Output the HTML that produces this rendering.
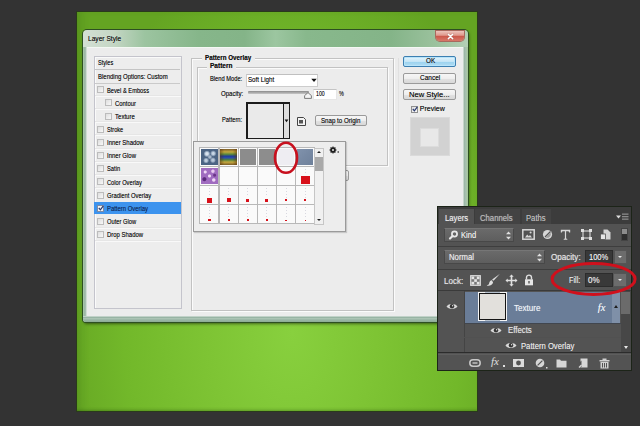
<!DOCTYPE html>
<html><head><meta charset="utf-8">
<style>
*{margin:0;padding:0;box-sizing:border-box}
html,body{width:640px;height:426px;overflow:hidden;background:#333333;font-family:"Liberation Sans",sans-serif;position:relative}
div,span{position:absolute}
.t{white-space:nowrap;line-height:10px;font-size:7px;color:#111;text-shadow:0 0 .6px rgba(0,0,0,.5);transform-origin:0 50%;transform:scaleX(.84)}
.t8{font-size:8px}
.t6{font-size:6.5px}
.t7{font-size:7px}
.t85{font-size:8.5px}
.b{font-weight:bold}
.w{color:#e2e2e2}
#green{left:77px;top:12px;width:400px;height:399px;
 background:radial-gradient(ellipse 240px 380px at 215px 320px,#88d03e 0%,#7ec434 35%,#72b82a 70%,#64a422 100%);
 box-shadow:0 0 0 1px #2a3a1c, inset 0 -3px 3px -2px rgba(20,60,0,.3), inset 8px 0 8px -4px rgba(20,60,0,.15)}
#frame{left:83px;top:30px;width:385px;height:292px;border-radius:4px 4px 3px 3px;
 background:linear-gradient(90deg,#d4e0d4 0%,#c4d6c4 8%,#9cc4a0 16%,#86b68a 30%,#84b488 42%,#9cc6a0 50%,#88b88c 58%,#84b488 80%,#9cc29e 92%,#b4d0b6 100%);
 box-shadow:0 0 0 1px #2d4f22, 1px 2px 3px rgba(0,0,0,.5)}
#frame2{left:83px;top:47px;width:385px;height:275px;border-radius:0 0 3px 3px;
 background:linear-gradient(90deg,#b4d8a8 0px,#98b4a2 1px,#aac2b2 3px,#f4f8f4 4px,#f4f8f4 380px,#98b4a2 381px,#aac2b2 383px,#a6c896 385px)}
#frame3{left:83px;top:316px;width:385px;height:6px;border-radius:0 0 3px 3px;
 background:linear-gradient(#f4f8f4 0px,#8eac9c 1px,#a2bcac 2px,#b4ccbc 3px,#8aa898 4px,#a4c0ac 5px,#7c9c84 6px)}
#client{left:87px;top:48px;width:376px;height:268px;background:#ececec}
#close{left:436px;top:31px;width:28px;height:10px;border-radius:0 0 4px 4px;
 background:linear-gradient(#ecc4bc 0%,#e09a8e 42%,#cc5a4c 55%,#d8786a 100%);box-shadow:0 0 0 1px #a86a5e}
.list{left:93.5px;top:55.5px;width:88px;height:253px;background:#ededed;border:1px solid #c4c4cc;box-shadow:1px 1px 0 #fafafa inset}
.sep{height:1px;background:#e2e2e2;left:95px;width:85px}
.cb{width:7px;height:7px;border:1px solid #bcbcbc;background:linear-gradient(135deg,#dedede,#f8f8f8)}
.gb{border:1px solid #c2c2c2;box-shadow:1px 1px 0 #fbfbfb inset,1px 1px 0 #fbfbfb}
.btn{border:1px solid #9a9a9a;border-radius:2px;background:linear-gradient(#f6f6f6 0%,#eeeeee 50%,#e2e2e2 51%,#d8d8d8 100%)}
</style></head><body>
<div id="green"></div>

<!-- dialog -->
<div id="frame"></div>
<div id="frame2"></div>
<div id="frame3"></div>
<div class="t t7" style="left:87.5px;top:34.3px;color:#141414;transform:scaleX(.946);text-shadow:0 0 .6px rgba(0,0,0,.5),0 0 3px rgba(255,255,255,.6)">Layer Style</div>
<div id="close"></div>
<svg style="position:absolute;left:447.3px;top:33px" width="7" height="7" viewBox="0 0 7 7"><path d="M1.3 1.3L5.7 5.7M5.7 1.3L1.3 5.7" stroke="#6a2a20" stroke-width="2.4" stroke-linecap="round" opacity=".3"/><path d="M1.3 1.3L5.7 5.7M5.7 1.3L1.3 5.7" stroke="#fff" stroke-width="1.6" stroke-linecap="round"/></svg>
<div id="client"></div>

<!-- left list -->
<div class="list"></div>
<div class="sep" style="top:68.6px;height:1.2px;background:#c4c4c4"></div>
<div class="sep" style="top:83px;background:#cacaca"></div>
<div style="left:94.5px;top:96.00px;width:86px;height:1px;background:#f9f9f9"></div><div style="left:94.5px;top:95.00px;width:86px;height:1px;background:#e6e6e6"></div><div style="left:94.5px;top:109.15px;width:86px;height:1px;background:#f9f9f9"></div><div style="left:94.5px;top:108.15px;width:86px;height:1px;background:#e6e6e6"></div><div style="left:94.5px;top:122.30px;width:86px;height:1px;background:#f9f9f9"></div><div style="left:94.5px;top:121.30px;width:86px;height:1px;background:#e6e6e6"></div><div style="left:94.5px;top:135.45px;width:86px;height:1px;background:#f9f9f9"></div><div style="left:94.5px;top:134.45px;width:86px;height:1px;background:#e6e6e6"></div><div style="left:94.5px;top:148.60px;width:86px;height:1px;background:#f9f9f9"></div><div style="left:94.5px;top:147.60px;width:86px;height:1px;background:#e6e6e6"></div><div style="left:94.5px;top:161.75px;width:86px;height:1px;background:#f9f9f9"></div><div style="left:94.5px;top:160.75px;width:86px;height:1px;background:#e6e6e6"></div><div style="left:94.5px;top:174.90px;width:86px;height:1px;background:#f9f9f9"></div><div style="left:94.5px;top:173.90px;width:86px;height:1px;background:#e6e6e6"></div><div style="left:94.5px;top:188.05px;width:86px;height:1px;background:#f9f9f9"></div><div style="left:94.5px;top:187.05px;width:86px;height:1px;background:#e6e6e6"></div><div style="left:94.5px;top:227.50px;width:86px;height:1px;background:#f9f9f9"></div><div style="left:94.5px;top:226.50px;width:86px;height:1px;background:#e6e6e6"></div><div style="left:94.5px;top:240.65px;width:86px;height:1px;background:#f9f9f9"></div><div style="left:94.5px;top:239.65px;width:86px;height:1px;background:#e6e6e6"></div>
<div class="t t6" style="left:97.8px;top:58.3px;transform:scaleX(0.86)">Styles</div>
<div class="t t6" style="transform:scaleX(0.923);left:97.8px;top:72.40px">Blending Options: Custom</div>
<div class="cb" style="left:97.3px;top:86.30px"></div>
<div class="t t6" style="left:106.9px;top:85.52px;transform:scaleX(0.881)">Bevel &amp; Emboss</div>
<div class="cb" style="left:104.8px;top:99.45px"></div>
<div class="t t6" style="left:114.6px;top:98.67px;transform:scaleX(0.908)">Contour</div>
<div class="cb" style="left:104.8px;top:112.60px"></div>
<div class="t t6" style="left:114.6px;top:111.82px;transform:scaleX(0.930)">Texture</div>
<div class="cb" style="left:97.3px;top:125.75px"></div>
<div class="t t6" style="left:106.9px;top:124.97px;transform:scaleX(0.861)">Stroke</div>
<div class="cb" style="left:97.3px;top:138.90px"></div>
<div class="t t6" style="left:106.9px;top:138.12px;transform:scaleX(0.921)">Inner Shadow</div>
<div class="cb" style="left:97.3px;top:152.05px"></div>
<div class="t t6" style="left:106.9px;top:151.27px;transform:scaleX(0.923)">Inner Glow</div>
<div class="cb" style="left:97.3px;top:165.20px"></div>
<div class="t t6" style="left:106.9px;top:164.42px;transform:scaleX(0.886)">Satin</div>
<div class="cb" style="left:97.3px;top:178.35px"></div>
<div class="t t6" style="left:106.9px;top:177.57px;transform:scaleX(0.876)">Color Overlay</div>
<div class="cb" style="left:97.3px;top:191.50px"></div>
<div class="t t6" style="left:106.9px;top:190.72px;transform:scaleX(0.900)">Gradient Overlay</div>
<div style="left:94px;top:201.7px;width:87px;height:12.2px;background:#3c93ee"></div>
<div class="cb" style="left:97.3px;top:204.65px;background:#f2f2f2;border-color:#7d8aa4"></div>
<svg style="position:absolute;left:98.1px;top:205.05px" width="6" height="6" viewBox="0 0 6 6"><path d="M0.8 3l1.6 1.8L5.3 0.8" fill="none" stroke="#2a3a70" stroke-width="1.2"/></svg>
<div class="t t6" style="left:106.9px;top:203.87px;transform:scaleX(0.908);color:#12306a">Pattern Overlay</div>
<div class="cb" style="left:97.3px;top:217.80px"></div>
<div class="t t6" style="left:106.9px;top:217.02px;transform:scaleX(0.884)">Outer Glow</div>
<div class="cb" style="left:97.3px;top:230.95px"></div>
<div class="t t6" style="left:106.9px;top:230.17px;transform:scaleX(0.915)">Drop Shadow</div>

<!-- right content -->
<div class="gb" style="left:191px;top:58px;width:203px;height:252.5px"></div>
<div style="left:397.5px;top:58px;width:1px;height:200px;background:linear-gradient(#e0e0e0,#ececec)"></div>
<div style="left:202px;top:54px;width:53px;height:8px;background:#ececec"></div>
<div class="t t6 b" style="left:204.5px;top:52.7px;transform:scaleX(0.960)">Pattern Overlay</div>
<div class="gb" style="left:196.5px;top:66.5px;width:191.5px;height:99.5px"></div>
<div style="left:207px;top:62px;width:29px;height:8px;background:#ececec"></div>
<div class="t t6 b" style="left:210px;top:60.7px;transform:scaleX(1.006)">Pattern</div>

<div class="t t6" style="left:209.8px;top:74.4px;transform:scaleX(0.882)">Blend Mode:</div>
<div style="left:245.5px;top:73.5px;width:72px;height:13px;background:#fff;border:1px solid #cdcdcd;border-top-color:#c0c0c0"></div>
<div class="t t6" style="left:248.1px;top:74.8px;transform:scaleX(0.951)">Soft Light</div>
<svg style="position:absolute;left:310.5px;top:77.5px" width="6" height="5" viewBox="0 0 6 5"><path d="M0.3 0.8h5.4L3 4z" fill="#111"/></svg>

<div class="t t6" style="left:220.6px;top:88.5px;transform:scaleX(0.932)">Opacity:</div>
<div style="left:248px;top:91.2px;width:61px;height:2.6px;background:linear-gradient(#8a8a8a,#c8c8c8);border-radius:1px"></div>
<svg style="position:absolute;left:304px;top:91.5px" width="8" height="7" viewBox="0 0 8 7"><path d="M4 0.6L7.4 3.6V6.4H0.6V3.6z" fill="#f4f4f4" stroke="#6e6e6e" stroke-width="0.9"/></svg>
<div style="left:312.5px;top:88.5px;width:24px;height:11px;background:#fff;border:1px solid #e6e6e6;border-top-color:#c4c4c4"></div>
<div class="t t6" style="left:316.2px;top:89.2px;transform:scaleX(0.803)">100</div>
<div class="t t6" style="left:339px;top:89.2px;transform:scaleX(0.831)">%</div>

<div class="t t6" style="left:222px;top:115px;transform:scaleX(0.886)">Pattern:</div>
<div style="left:246.2px;top:102.2px;width:44px;height:36.8px;background:#1c1c1c"></div>
<div style="left:247.6px;top:103.6px;width:35.4px;height:34px;background:#eaeaea"></div>
<div style="left:284.2px;top:103.6px;width:4.6px;height:34px;background:#dedede"></div>
<svg style="position:absolute;left:284.3px;top:119.3px" width="5" height="4" viewBox="0 0 5 4"><path d="M0.6 0.6h3.8L2.5 3.2z" fill="#111"/></svg>
<svg style="position:absolute;left:296px;top:115.5px" width="11" height="11" viewBox="0 0 11 11"><path d="M1.5 1.5h6l2 2v6h-8z" fill="#f4f4f4" stroke="#444" stroke-width="1"/><path d="M3 4h4v3.5H3z" fill="#555"/></svg>
<div class="btn" style="left:314.5px;top:115.4px;width:52px;height:11px"></div>
<div class="t t6" style="left:320.9px;top:116.1px;transform:scaleX(0.947)">Snap to Origin</div>

<div class="btn" style="left:343px;top:169.5px;width:6px;height:11px"></div>

<!-- popup picker -->
<div id="popup" style="left:193px;top:141px;width:152.5px;height:91px;background:#ededed;border:1px solid #9a9a9a;box-shadow:1px 1px 1px rgba(0,0,0,.15)"></div>
<div style="left:199.4px;top:147.4px;width:115.9px;height:76.4px;background:#b8b8b8"></div>
<div style="left:200.4px;top:148.4px;width:18.1px;height:17.9px;background:#fafafa"></div>
<div style="left:201.2px;top:149.2px;width:16.5px;height:16.2px;background:radial-gradient(circle at 35% 30%,#d8e2ee 0 1.2px,#9fb2c8 2.2px,transparent 3.4px),radial-gradient(circle at 72% 28%,#c8d6e6 0 1px,#95a8c0 2px,transparent 3.2px),radial-gradient(circle at 30% 72%,#c0cede 0 1px,#8ea2ba 2px,transparent 3px),radial-gradient(circle at 70% 70%,#b8c8da 0 1px,#8ea0b8 2px,transparent 3px),radial-gradient(circle at 52% 50%,#a8b8cc 0 1px,transparent 2.5px),#4c6484"></div>
<div style="left:219.6px;top:148.4px;width:18.1px;height:17.9px;background:#fafafa"></div>
<div style="left:220.4px;top:149.2px;width:16.5px;height:16.2px;background:linear-gradient(90deg,rgba(90,50,10,.55),transparent 25%,transparent 75%,rgba(90,50,10,.55)),linear-gradient(#7a5a28 0%,#c4a83e 18%,#5a8a3a 33%,#1e3c9a 45%,#2a4cae 55%,#4a8040 67%,#c4a83e 82%,#7a5a28 100%)"></div>
<div style="left:238.7px;top:148.4px;width:18.1px;height:17.9px;background:#fafafa"></div>
<div style="left:239.5px;top:149.2px;width:16.5px;height:16.2px;background:#8c8c8c"></div>
<div style="left:257.9px;top:148.4px;width:18.1px;height:17.9px;background:#fafafa"></div>
<div style="left:258.7px;top:149.2px;width:16.5px;height:16.2px;background:#8d8d8d"></div>
<div style="left:277.0px;top:148.4px;width:18.1px;height:17.9px;background:#fafafa"></div>
<div style="left:277.8px;top:149.2px;width:16.5px;height:16.2px;background:#eeedf2"></div>
<div style="left:296.1px;top:148.4px;width:18.1px;height:17.9px;background:#fafafa"></div>
<div style="left:296.9px;top:149.2px;width:16.5px;height:16.2px;background:linear-gradient(135deg,#8092ac,#6e809a)"></div>
<div style="left:200.4px;top:167.2px;width:18.1px;height:17.9px;background:#fafafa"></div>
<div style="left:201.2px;top:168.1px;width:16.5px;height:16.2px;background:radial-gradient(circle at 25% 25%,#f0d8f6 0 1px,transparent 2px),radial-gradient(circle at 70% 20%,#e8c8f0 0 1.2px,transparent 2.2px),radial-gradient(circle at 50% 50%,#f4e0f8 0 1px,transparent 2px),radial-gradient(circle at 20% 70%,#5a2a7a 0 1.5px,transparent 2.5px),radial-gradient(circle at 75% 75%,#eed6f4 0 1.2px,transparent 2.2px),radial-gradient(circle at 80% 45%,#6a3488 0 1px,transparent 2px),#a06cc0"></div>
<div style="left:219.6px;top:167.2px;width:18.1px;height:17.9px;background:#fafafa"></div>
<div style="left:238.7px;top:167.2px;width:18.1px;height:17.9px;background:#fafafa"></div>
<div style="left:257.9px;top:167.2px;width:18.1px;height:17.9px;background:#fafafa"></div>
<div style="left:277.0px;top:167.2px;width:18.1px;height:17.9px;background:#fafafa"></div>
<div style="left:296.1px;top:167.2px;width:18.1px;height:17.9px;background:#fafafa"></div>
<div style="left:200.4px;top:186.1px;width:18.1px;height:17.9px;background:#fafafa"></div>
<div style="left:219.6px;top:186.1px;width:18.1px;height:17.9px;background:#fafafa"></div>
<div style="left:238.7px;top:186.1px;width:18.1px;height:17.9px;background:#fafafa"></div>
<div style="left:257.9px;top:186.1px;width:18.1px;height:17.9px;background:#fafafa"></div>
<div style="left:277.0px;top:186.1px;width:18.1px;height:17.9px;background:#fafafa"></div>
<div style="left:296.1px;top:186.1px;width:18.1px;height:17.9px;background:#fafafa"></div>
<div style="left:200.4px;top:205.0px;width:18.1px;height:17.9px;background:#fafafa"></div>
<div style="left:219.6px;top:205.0px;width:18.1px;height:17.9px;background:#fafafa"></div>
<div style="left:238.7px;top:205.0px;width:18.1px;height:17.9px;background:#fafafa"></div>
<div style="left:257.9px;top:205.0px;width:18.1px;height:17.9px;background:#fafafa"></div>
<div style="left:277.0px;top:205.0px;width:18.1px;height:17.9px;background:#fafafa"></div>
<div style="left:296.1px;top:205.0px;width:18.1px;height:17.9px;background:#fafafa"></div>
<div style="left:301.0px;top:175.6px;width:8.5px;height:8.5px;background:#d8101a"></div>
<div style="left:304.7px;top:169.2px;width:1px;height:5.3px;background:repeating-linear-gradient(#d8d8e0 0 1px,transparent 1px 3px)"></div>
<div style="left:207.2px;top:198.1px;width:4.5px;height:4.5px;background:#d8101a"></div>
<div style="left:209.0px;top:188.1px;width:1px;height:8.4px;background:repeating-linear-gradient(#d8d8e0 0 1px,transparent 1px 3px)"></div>
<div style="left:226.6px;top:198.3px;width:4px;height:4px;background:#d8101a"></div>
<div style="left:228.1px;top:188.1px;width:1px;height:8.9px;background:repeating-linear-gradient(#d8d8e0 0 1px,transparent 1px 3px)"></div>
<div style="left:246.3px;top:198.8px;width:3px;height:3px;background:#d8101a"></div>
<div style="left:247.3px;top:188.1px;width:1px;height:9.4px;background:repeating-linear-gradient(#d8d8e0 0 1px,transparent 1px 3px)"></div>
<div style="left:265.4px;top:198.8px;width:3px;height:3px;background:#d8101a"></div>
<div style="left:266.4px;top:188.1px;width:1px;height:9.4px;background:repeating-linear-gradient(#d8d8e0 0 1px,transparent 1px 3px)"></div>
<div style="left:285.0px;top:199.2px;width:2.2px;height:2.2px;background:#d8101a"></div>
<div style="left:285.6px;top:188.1px;width:1px;height:9.9px;background:repeating-linear-gradient(#d8d8e0 0 1px,transparent 1px 3px)"></div>
<div style="left:304.1px;top:199.2px;width:2.2px;height:2.2px;background:#d8101a"></div>
<div style="left:304.7px;top:188.1px;width:1px;height:9.9px;background:repeating-linear-gradient(#d8d8e0 0 1px,transparent 1px 3px)"></div>
<div style="left:208.4px;top:219.1px;width:2.2px;height:2.2px;background:#d8101a"></div>
<div style="left:209.0px;top:207.0px;width:1px;height:11.1px;background:repeating-linear-gradient(#d8d8e0 0 1px,transparent 1px 3px)"></div>
<div style="left:227.5px;top:219.1px;width:2.2px;height:2.2px;background:#d8101a"></div>
<div style="left:228.1px;top:207.0px;width:1px;height:11.1px;background:repeating-linear-gradient(#d8d8e0 0 1px,transparent 1px 3px)"></div>
<div style="left:246.9px;top:219.2px;width:1.8px;height:1.8px;background:#d8101a"></div>
<div style="left:247.3px;top:207.0px;width:1px;height:11.3px;background:repeating-linear-gradient(#d8d8e0 0 1px,transparent 1px 3px)"></div>
<div style="left:266.0px;top:219.2px;width:1.8px;height:1.8px;background:#d8101a"></div>
<div style="left:266.4px;top:207.0px;width:1px;height:11.3px;background:repeating-linear-gradient(#d8d8e0 0 1px,transparent 1px 3px)"></div>
<div style="left:285.4px;top:219.5px;width:1.4px;height:1.4px;background:#d8101a"></div>
<div style="left:285.6px;top:207.0px;width:1px;height:11.5px;background:repeating-linear-gradient(#d8d8e0 0 1px,transparent 1px 3px)"></div>
<div style="left:304.5px;top:219.5px;width:1.4px;height:1.4px;background:#d8101a"></div>
<div style="left:304.7px;top:207.0px;width:1px;height:11.5px;background:repeating-linear-gradient(#d8d8e0 0 1px,transparent 1px 3px)"></div>
<div style="left:314px;top:147.5px;width:10px;height:77.4px;background:#f0f0f0;border:1px solid #c6c6c6"></div>
<div style="left:316.5px;top:151px;width:0;height:0;border-left:2.5px solid transparent;border-right:2.5px solid transparent;border-bottom:2.5px solid #222"></div>
<div style="left:315px;top:156.5px;width:8px;height:14px;background:#a9a9a9"></div>
<div style="left:316.5px;top:218.5px;width:0;height:0;border-left:2.5px solid transparent;border-right:2.5px solid transparent;border-top:2.5px solid #222"></div>
<svg style="position:absolute;left:328.6px;top:146.4px" width="11" height="8" viewBox="0 0 11 8"><g fill="#1e1e1e"><circle cx="4" cy="4" r="2.6"/><rect x="3.3" y="0.6" width="1.4" height="6.8"/><rect x="0.6" y="3.3" width="6.8" height="1.4"/><rect x="3.3" y="0.6" width="1.4" height="6.8" transform="rotate(45 4 4)"/><rect x="3.3" y="0.6" width="1.4" height="6.8" transform="rotate(-45 4 4)"/></g><circle cx="4" cy="4" r="1" fill="#ededed"/><circle cx="9.2" cy="6" r="0.8" fill="#1e1e1e"/></svg>
<svg style="position:absolute;left:270px;top:138px" width="32" height="40" viewBox="0 0 32 40"><ellipse cx="16" cy="19.8" rx="11" ry="15" fill="none" stroke="#c8101e" stroke-width="2.6"/></svg>


<!-- right buttons -->
<div style="left:403.4px;top:55.6px;width:53px;height:11px;border:1px solid #3c7fb1;border-radius:2px;background:linear-gradient(#e5f5fc 0%,#c4e5f6 50%,#98d1ef 51%,#b2dcf2 100%);box-shadow:0 0 0 1px #b8e4fa inset"></div>
<div class="t t7" style="left:425.5px;top:56.4px;transform:scaleX(.9)">OK</div>
<div class="btn" style="left:403.4px;top:72.5px;width:53px;height:11px"></div>
<div class="t t7" style="left:419.8px;top:73.2px;transform:scaleX(.926)">Cancel</div>
<div class="btn" style="left:403.4px;top:89.4px;width:53px;height:11px"></div>
<div class="t t7" style="left:409.2px;top:90.3px;transform:scaleX(1.088)">New Style...</div>
<div class="cb" style="left:410.8px;top:105.5px;width:7px;height:7px;border-color:#8f8f8f"></div>
<svg style="position:absolute;left:411.6px;top:106.2px" width="6" height="6" viewBox="0 0 6 6"><path d="M0.8 3l1.6 1.8L5.3 0.8" fill="none" stroke="#2a3a70" stroke-width="1.2"/></svg>
<div class="t t7" style="left:419.8px;top:104.4px;transform:scaleX(1.0)">Preview</div>
<div style="left:410px;top:117px;width:39.5px;height:39px;background:#d2d2d2;border:1px solid #dadada"></div>
<div style="left:419.8px;top:127.6px;width:19px;height:19px;background:#e8e8e8;border:1px solid #dcdcdc"></div>

<!-- layers panel -->
<div style="left:438px;top:207px;width:193px;height:162.5px;background:#535353;box-shadow:0 0 0 1px #1c2418"></div>
<div style="left:438px;top:207px;width:193px;height:17px;background:#3c3c3c"></div>
<div style="left:439px;top:209px;width:35px;height:15px;background:#535353"></div>
<div style="left:475px;top:209px;width:45px;height:14.5px;background:#434343"></div>
<div style="left:522px;top:209px;width:29px;height:14.5px;background:#434343"></div>
<div class="t t85 w" style="transform:scaleX(0.910);text-shadow:0 0 .7px rgba(255,255,255,.55);left:445px;top:212.8px;color:#ececec">Layers</div>
<div class="t t85" style="transform:scaleX(0.908);text-shadow:0 0 .7px rgba(255,255,255,.55);left:480px;top:212.8px;color:#b4b4b4">Channels</div>
<div class="t t85" style="transform:scaleX(0.903);text-shadow:0 0 .7px rgba(255,255,255,.55);left:525.6px;top:212.8px;color:#b4b4b4">Paths</div>
<svg style="position:absolute;left:615px;top:213px" width="14" height="9" viewBox="0 0 14 9"><path d="M1 2.5h5l-2.5 3z" fill="#ddd"/><g fill="#8a8a8a"><rect x="7" y="0.5" width="6.5" height="1.3"/><rect x="7" y="3" width="6.5" height="1.3"/><rect x="7" y="5.5" width="6.5" height="1.3"/></g></svg>

<!-- filter row -->
<div style="left:444px;top:227.5px;width:70px;height:14.5px;background:linear-gradient(#6a6a6a,#5e5e5e);border:1px solid #484848;border-top-color:#767676;border-radius:1px"></div>
<svg style="position:absolute;left:447px;top:229px" width="12" height="11" viewBox="0 0 12 11"><circle cx="7.5" cy="5" r="2.6" fill="none" stroke="#e8e8e8" stroke-width="1.7"/><path d="M5.6 7L3 9.6" stroke="#e8e8e8" stroke-width="2.1" stroke-linecap="round"/></svg>
<div class="t t85" style="transform:scaleX(0.891);text-shadow:0 0 .7px rgba(255,255,255,.55);left:460.6px;top:230.4px;color:#ececec">Kind</div>
<svg style="position:absolute;left:505px;top:229.5px" width="7" height="11" viewBox="0 0 7 11"><path d="M1 4.3L3.5 1.5 6 4.3zM1 6.7L3.5 9.5 6 6.7z" fill="#e0e0e0"/></svg>
<svg style="position:absolute;left:522px;top:229px" width="13" height="11" viewBox="0 0 13 11"><rect x="0.8" y="0.8" width="11.4" height="9.4" fill="none" stroke="#d8d8d8" stroke-width="1.5"/><path d="M3 8.5l2.2-3 1.6 1.8 1.2-1.2 2 2.4z" fill="#d8d8d8"/><circle cx="8.6" cy="3.6" r="1" fill="#d8d8d8"/></svg>
<svg style="position:absolute;left:542px;top:229px" width="11" height="11" viewBox="0 0 11 11"><circle cx="5.5" cy="5.5" r="4.6" fill="#d6d6d6"/><path d="M3 8L8.5 2.5" stroke="#555" stroke-width="1.3"/><path d="M3.5 8.5A3.8 3.8 0 0 0 8.5 3.5z" fill="#9a9a9a"/></svg>
<svg style="position:absolute;left:560px;top:229px" width="11" height="11" viewBox="0 0 11 11"><path d="M0.8 0.8h9.4v2.8h-1.1l-0.5-1.4h-2.5v7.2l1.2 0.5v0.9h-3.6v-0.9l1.2-0.5v-7.2h-2.5l-0.5 1.4h-1.1z" fill="#d8d8d8"/></svg>
<svg style="position:absolute;left:581px;top:229px" width="11" height="11" viewBox="0 0 11 11"><rect x="2" y="2" width="7" height="7" fill="none" stroke="#d0d0d0" stroke-width="1.2"/><g fill="#e0e0e0"><rect x="0" y="0" width="3" height="3"/><rect x="8" y="0" width="3" height="3"/><rect x="0" y="8" width="3" height="3"/><rect x="8" y="8" width="3" height="3"/></g></svg>
<svg style="position:absolute;left:600px;top:229px" width="11" height="11" viewBox="0 0 11 11"><path d="M3.5 0.5h4l3 3v7h-7z" fill="#d4d4d4"/><rect x="0.5" y="5" width="5" height="5.5" fill="#e6e6e6" stroke="#535353" stroke-width="0.8"/></svg>
<div style="left:621px;top:227.5px;width:7px;height:13.5px;background:#2e2e2e;border:1px solid #444"></div>
<div style="left:622px;top:228.5px;width:5px;height:5.5px;background:#8c8c8c"></div>
<div style="left:438px;top:245.5px;width:193px;height:1px;background:#3e3e3e"></div>

<!-- blend row -->
<div style="left:444px;top:250px;width:101px;height:14px;background:linear-gradient(#6a6a6a,#5e5e5e);border:1px solid #484848;border-top-color:#767676;border-radius:1px"></div>
<div class="t t85" style="transform:scaleX(0.909);text-shadow:0 0 .7px rgba(255,255,255,.55);left:449px;top:252.3px;color:#ececec">Normal</div>
<svg style="position:absolute;left:536px;top:251.5px" width="7" height="11" viewBox="0 0 7 11"><path d="M1 4.3L3.5 1.5 6 4.3zM1 6.7L3.5 9.5 6 6.7z" fill="#e0e0e0"/></svg>
<div class="t t85" style="transform:scaleX(0.951);text-shadow:0 0 .7px rgba(255,255,255,.55);left:551px;top:252.3px;color:#e4e4e4">Opacity:</div>
<div style="left:585px;top:250px;width:28px;height:13.5px;background:#393939;border:1px solid #2c2c2c"></div>
<div class="t t85" style="transform:scaleX(0.884);text-shadow:0 0 .7px rgba(255,255,255,.55);left:589px;top:252.3px;color:#ececec">100%</div>
<div style="left:613.5px;top:250px;width:13.5px;height:13.5px;background:#6c6c6c;border:1px solid #555"></div>
<div style="left:618px;top:256px;width:0;height:0;border-left:2.3px solid transparent;border-right:2.3px solid transparent;border-top:2.5px solid #e8e8e8"></div>
<div style="left:438px;top:268.5px;width:193px;height:1px;background:#3e3e3e"></div>

<!-- lock row -->
<div class="t t85" style="transform:scaleX(0.942);text-shadow:0 0 .7px rgba(255,255,255,.55);left:444.2px;top:275.5px;color:#e4e4e4">Lock:</div>
<svg style="position:absolute;left:470px;top:275px" width="11" height="11" viewBox="0 0 11 11"><rect x="0.7" y="0.7" width="9.6" height="9.6" fill="#777" stroke="#ddd" stroke-width="1.2"/><g fill="#e4e4e4"><rect x="1.5" y="1.5" width="2.7" height="2.7"/><rect x="6.8" y="1.5" width="2.7" height="2.7"/><rect x="4.2" y="4.2" width="2.7" height="2.7"/><rect x="1.5" y="6.8" width="2.7" height="2.7"/><rect x="6.8" y="6.8" width="2.7" height="2.7"/></g></svg>
<svg style="position:absolute;left:486px;top:273px" width="15" height="14" viewBox="0 0 15 14"><path d="M14 0.8L7.5 7.8l-1.4-1.2z" fill="#e0e0e0"/><path d="M6 7.2c-1.8 0-2.6 1.5-2.9 3.3-0.2 1-1.2 1.6-2.4 1.9 2.2 0.7 5.2 0.3 6.4-2.6z" fill="#e0e0e0"/></svg>
<svg style="position:absolute;left:504.5px;top:274px" width="13" height="13" viewBox="0 0 13 13"><path d="M6.5 0.5l2.2 2.3h-1.4v3h3v-1.4l2.2 2.1-2.2 2.1v-1.4h-3v3h1.4l-2.2 2.3-2.2-2.3h1.4v-3h-3v1.4l-2.2-2.1 2.2-2.1v1.4h3v-3h-1.4z" fill="#e0e0e0"/></svg>
<svg style="position:absolute;left:523.5px;top:274px" width="10" height="12" viewBox="0 0 10 12"><path d="M2.5 5.5V3.6a2.5 2.5 0 0 1 5 0v1.9" fill="none" stroke="#e0e0e0" stroke-width="1.4"/><rect x="1" y="5.3" width="8" height="6" fill="#e6e6e6"/><rect x="4.3" y="7" width="1.4" height="2.5" fill="#535353"/></svg>
<div class="t t85" style="transform:scaleX(0.856);text-shadow:0 0 .7px rgba(255,255,255,.55);left:568.7px;top:274.5px;color:#e4e4e4">Fill:</div>
<div style="left:585px;top:272.5px;width:28px;height:14px;background:#393939;border:1px solid #2c2c2c"></div>
<div class="t t85" style="transform:scaleX(0.943);text-shadow:0 0 .7px rgba(255,255,255,.55);left:588.4px;top:274.8px;color:#ececec">0%</div>
<div style="left:612.5px;top:272.5px;width:14.5px;height:14px;background:#6c6c6c;border:1px solid #555"></div>
<div style="left:617.5px;top:278.5px;width:0;height:0;border-left:2.3px solid transparent;border-right:2.3px solid transparent;border-top:2.5px solid #e8e8e8"></div>
<div style="left:438px;top:289.5px;width:193px;height:1px;background:#3a3a3a"></div>

<!-- layer list -->
<div style="left:463.5px;top:290.5px;width:1px;height:61px;background:#444"></div>
<div style="left:464.5px;top:291.5px;width:147.5px;height:31px;background:#6a7d98"></div>
<div style="left:612px;top:291.5px;width:8px;height:31px;background:#7f90a8"></div>
<div style="left:613.5px;top:304.5px;width:0;height:0;border-left:2.5px solid transparent;border-right:2.5px solid transparent;border-bottom:3px solid #1e1e1e"></div>
<div style="left:620.5px;top:291px;width:10px;height:61px;background:#474747"></div>
<div style="left:621px;top:292px;width:9px;height:21.5px;background:#6b6b6b"></div>
<div style="left:623.5px;top:346px;width:0;height:0;border-left:2.5px solid transparent;border-right:2.5px solid transparent;border-top:3px solid #e8e8e8"></div>
<div style="left:464.5px;top:322.5px;width:156px;height:1px;background:#41464e"></div>
<div style="left:464px;top:337px;width:156.5px;height:1px;background:#515151"></div>
<!-- eye -->
<svg style="position:absolute;left:446px;top:302px" width="12" height="9" viewBox="0 0 12 9"><path d="M0.5 4.5C2.5 1.2 9.5 1.2 11.5 4.5 9.5 7.8 2.5 7.8 0.5 4.5z" fill="#d8d8d8"/><circle cx="6" cy="4.3" r="2.2" fill="#333"/><circle cx="6.6" cy="3.7" r="0.7" fill="#ddd"/></svg>
<!-- thumbnail -->
<div style="left:478px;top:292.4px;width:29px;height:28.7px;border:1px solid #f4f4f4"></div>
<div style="left:485px;top:292.4px;width:15px;height:1px;background:#b4bfcc"></div>
<div style="left:485px;top:320.1px;width:15px;height:1px;background:#b4bfcc"></div>
<div style="left:479px;top:293.4px;width:27px;height:26.7px;border:1.6px solid #151515;background:#e2e0dc"></div>
<div class="t" style="font-size:8.7px;text-shadow:0 0 .7px rgba(255,255,255,.55);left:513.7px;top:303.2px;color:#eef2f8;transform:scaleX(.93)">Texture</div>
<div style="left:597.8px;top:301.5px;font-family:'Liberation Serif',serif;font-style:italic;font-size:10.5px;line-height:12px;color:#eef2f8;text-shadow:0 0 .6px rgba(255,255,255,.6)">fx</div>
<svg style="position:absolute;left:490px;top:325.5px" width="12" height="9" viewBox="0 0 12 9"><path d="M0.5 4.5C2.5 1.2 9.5 1.2 11.5 4.5 9.5 7.8 2.5 7.8 0.5 4.5z" fill="#d8d8d8"/><circle cx="6" cy="4.3" r="2.2" fill="#333"/><circle cx="6.6" cy="3.7" r="0.7" fill="#ddd"/></svg>
<div class="t t85" style="transform:scaleX(0.919);text-shadow:0 0 .7px rgba(255,255,255,.55);left:507.5px;top:325.2px;color:#e4e4e4">Effects</div>
<svg style="position:absolute;left:505px;top:341px" width="12" height="9" viewBox="0 0 12 9"><path d="M0.5 4.5C2.5 1.2 9.5 1.2 11.5 4.5 9.5 7.8 2.5 7.8 0.5 4.5z" fill="#d8d8d8"/><circle cx="6" cy="4.3" r="2.2" fill="#333"/><circle cx="6.6" cy="3.7" r="0.7" fill="#ddd"/></svg>
<div class="t t85" style="transform:scaleX(0.903);text-shadow:0 0 .7px rgba(255,255,255,.55);left:521.4px;top:340.8px;color:#e4e4e4">Pattern Overlay</div>

<!-- footer -->
<div style="left:438px;top:352.3px;width:193px;height:1.2px;background:#2c2c2c"></div>
<div style="left:438px;top:353.5px;width:193px;height:1px;background:#5e5e5e"></div>
<svg style="position:absolute;left:469px;top:358.5px" width="12" height="8" viewBox="0 0 12 8"><rect x="0.8" y="0.8" width="10.4" height="6.4" rx="3.2" fill="none" stroke="#c8c8c8" stroke-width="1.5"/><rect x="3.5" y="3.3" width="5" height="1.4" fill="#c8c8c8"/></svg>
<div style="left:491px;top:356px;font-family:'Liberation Serif',serif;font-style:italic;font-size:11px;line-height:11px;color:#e0e0e0">fx</div>
<div style="left:503px;top:365px;width:1.5px;height:1.5px;background:#e0e0e0"></div>
<svg style="position:absolute;left:513px;top:359px" width="11" height="8" viewBox="0 0 11 8"><rect x="0" y="0" width="11" height="8" fill="#dcdcdc"/><circle cx="5.5" cy="4" r="2.4" fill="#535353"/></svg>
<svg style="position:absolute;left:535px;top:357.5px" width="14" height="11" viewBox="0 0 14 11"><circle cx="5" cy="5" r="4.3" fill="#d6d6d6"/><path d="M2.6 7.4L7.4 2.6" stroke="#535353" stroke-width="1.2"/><rect x="11" y="9" width="1.5" height="1.5" fill="#ddd"/></svg>
<svg style="position:absolute;left:556px;top:358.5px" width="11" height="9" viewBox="0 0 11 9"><path d="M0.5 0.5h3.5l1 1.2h5.5v6.8h-10z" fill="#d6d6d6"/></svg>
<svg style="position:absolute;left:578px;top:358px" width="10" height="10" viewBox="0 0 10 10"><path d="M2.5 0.5h7v9h-7z" fill="#d8d8d8"/><path d="M0.5 5.5l3-3v7z" fill="#535353"/><path d="M1 9.5l2.5-2.5" stroke="#d8d8d8" stroke-width="1.2"/></svg>
<svg style="position:absolute;left:598.5px;top:357.5px" width="11" height="11" viewBox="0 0 11 11"><rect x="3.5" y="0.5" width="4" height="1.5" fill="#d0d0d0"/><rect x="0.5" y="2" width="10" height="1.5" fill="#d0d0d0"/><path d="M1.5 4h8v6.5h-8z" fill="#d0d0d0"/><g fill="#535353"><rect x="3" y="5" width="1" height="4.5"/><rect x="5" y="5" width="1" height="4.5"/><rect x="7" y="5" width="1" height="4.5"/></g></svg>

<svg style="position:absolute;left:548px;top:260px" width="92" height="38" viewBox="0 0 92 38"><ellipse cx="45.6" cy="19" rx="41.5" ry="15.5" fill="none" stroke="#d0101c" stroke-width="3"/></svg>

</body></html>
